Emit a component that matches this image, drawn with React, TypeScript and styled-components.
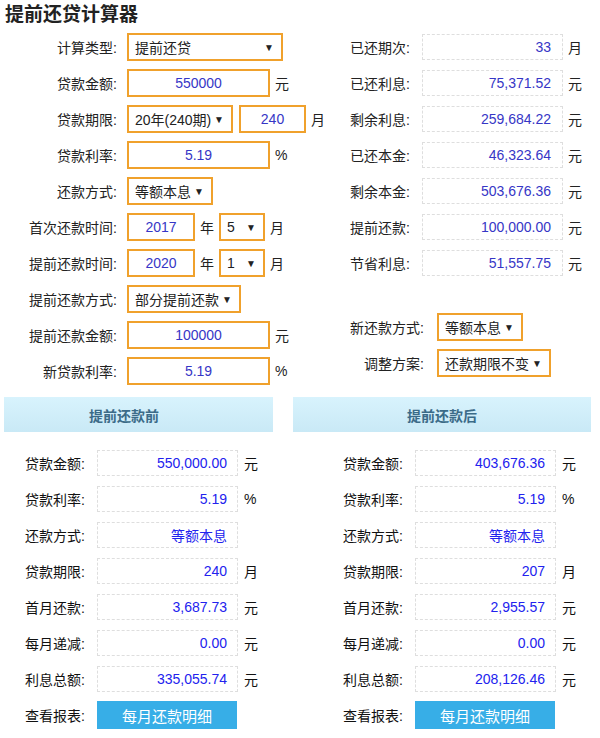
import styled, { createGlobalStyle } from "styled-components";

const Global = createGlobalStyle`
  body {
    margin: 0;
    background: #fff;
    color: #222;
    font-family: "Liberation Sans", "Noto Sans CJK SC", sans-serif;
    font-size: 14px;
  }
`;

const Page = styled.div`
  width: 600px;
  padding-bottom: 9px;
`;

const Title = styled.h1`
  margin: 0;
  padding-left: 5px;
  font-size: 19px;
  line-height: 29px;
  font-weight: bold;
  color: #222;
`;

const Top = styled.div`
  display: flex;
`;

const FormCol = styled.div`
  width: 330px;
  display: flex;
  flex-direction: column;
`;

const ResultCol = styled.div`
  display: flex;
  flex-direction: column;
`;

const Row = styled.div<{ $top?: number }>`
  display: flex;
  align-items: center;
  height: 36px;
  margin-top: ${(p) => p.$top ?? 0}px;
`;

const Label = styled.span<{ $w: number; $gap: number }>`
  width: ${(p) => p.$w}px;
  margin-right: ${(p) => p.$gap}px;
  text-align: right;
  white-space: nowrap;
  color: #222;
`;

const Unit = styled.span`
  margin: 0 5px;
  color: #222;
`;

const Field = styled.input<{ $w: number }>`
  box-sizing: border-box;
  width: ${(p) => p.$w}px;
  height: 28px;
  border: 2px solid #f0a12c;
  background: #fff;
  padding: 0;
  text-align: center;
  font: inherit;
  color: #3636c6;
  outline: none;
`;

const Select = styled.div<{ $w: number; $after?: number }>`
  box-sizing: border-box;
  width: ${(p) => p.$w}px;
  height: 28px;
  margin-right: ${(p) => p.$after ?? 0}px;
  border: 2px solid #f0a12c;
  background: #fff;
  display: flex;
  align-items: center;
  padding: 0 7px 0 6px;
  color: #222;
  white-space: nowrap;
  span {
    margin-left: auto;
    font-size: 10px;
  }
`;

const Result = styled.div`
  box-sizing: border-box;
  width: 141px;
  height: 26px;
  border: 1px dashed #dedede;
  padding-right: 11px;
  display: flex;
  align-items: center;
  justify-content: flex-end;
  color: #3636c6;
`;

const Bottom = styled.div`
  display: flex;
  margin-top: 8px;
`;

const Panel = styled.div<{ $left: number; $w: number; $indent: number }>`
  margin-left: ${(p) => p.$left}px;
  width: ${(p) => p.$w}px;
  display: flex;
  flex-direction: column;
  > div:not(:first-child) {
    padding-left: ${(p) => p.$indent}px;
  }
`;

const Bar = styled.div<{ $shift?: number }>`
  height: 35px;
  margin-bottom: 13px;
  background: linear-gradient(to bottom, #d8f3fd, #c9e9f6);
  display: flex;
  align-items: center;
  justify-content: center;
  padding-right: ${(p) => p.$shift ?? 0}px;
  font-weight: bold;
  color: #3b6b88;
`;

const OutLabel = styled.span`
  width: 63px;
  margin-right: 12px;
  text-align: right;
  white-space: nowrap;
  color: #111;
`;

const OutBox = styled.div`
  box-sizing: border-box;
  width: 141px;
  height: 26px;
  border: 1px dashed #dedede;
  padding-right: 10px;
  display: flex;
  align-items: center;
  justify-content: flex-end;
  color: #2222ee;
`;

const OutUnit = styled.span`
  margin-left: 6px;
  color: #111;
`;

const DetailButton = styled.button`
  width: 140px;
  height: 28px;
  border: none;
  background: #37aee7;
  color: #fff;
  font-family: "Liberation Sans", "Noto Sans CJK SC", sans-serif;
  font-size: 15px;
  padding: 0;
  cursor: pointer;
`;

const results = [
  { label: "已还期次:", value: "33", unit: "月" },
  { label: "已还利息:", value: "75,371.52", unit: "元" },
  { label: "剩余利息:", value: "259,684.22", unit: "元" },
  { label: "已还本金:", value: "46,323.64", unit: "元" },
  { label: "剩余本金:", value: "503,676.36", unit: "元" },
  { label: "提前还款:", value: "100,000.00", unit: "元" },
  { label: "节省利息:", value: "51,557.75", unit: "元" },
];

const before = [
  { label: "贷款金额:", value: "550,000.00", unit: "元" },
  { label: "贷款利率:", value: "5.19", unit: "%" },
  { label: "还款方式:", value: "等额本息", unit: "" },
  { label: "贷款期限:", value: "240", unit: "月" },
  { label: "首月还款:", value: "3,687.73", unit: "元" },
  { label: "每月递减:", value: "0.00", unit: "元" },
  { label: "利息总额:", value: "335,055.74", unit: "元" },
];

const after = [
  { label: "贷款金额:", value: "403,676.36", unit: "元" },
  { label: "贷款利率:", value: "5.19", unit: "%" },
  { label: "还款方式:", value: "等额本息", unit: "" },
  { label: "贷款期限:", value: "207", unit: "月" },
  { label: "首月还款:", value: "2,955.57", unit: "元" },
  { label: "每月递减:", value: "0.00", unit: "元" },
  { label: "利息总额:", value: "208,126.46", unit: "元" },
];

type Line = { label: string; value: string; unit: string };

function OutRows({ rows }: { rows: Line[] }) {
  return (
    <>
      {rows.map((r) => (
        <Row key={r.label}>
          <OutLabel>{r.label}</OutLabel>
          <OutBox>{r.value}</OutBox>
          {r.unit && <OutUnit>{r.unit}</OutUnit>}
        </Row>
      ))}
      <Row>
        <OutLabel>查看报表:</OutLabel>
        <DetailButton>每月还款明细</DetailButton>
      </Row>
    </>
  );
}

const Arrow = () => <span>▼</span>;

export default function App() {
  return (
    <Page>
      <Global />
      <Title>提前还贷计算器</Title>
      <Top>
        <FormCol>
          <Row>
            <Label $w={117} $gap={10}>计算类型:</Label>
            <Select $w={156}>
              提前还贷
              <Arrow />
            </Select>
          </Row>
          <Row>
            <Label $w={117} $gap={10}>贷款金额:</Label>
            <Field $w={143} value="550000" readOnly />
            <Unit>元</Unit>
          </Row>
          <Row>
            <Label $w={117} $gap={10}>贷款期限:</Label>
            <Select $w={106} $after={6}>
              20年(240期)
              <Arrow />
            </Select>
            <Field $w={67} value="240" readOnly />
            <Unit>月</Unit>
          </Row>
          <Row>
            <Label $w={117} $gap={10}>贷款利率:</Label>
            <Field $w={143} value="5.19" readOnly />
            <Unit>%</Unit>
          </Row>
          <Row>
            <Label $w={117} $gap={10}>还款方式:</Label>
            <Select $w={86}>
              等额本息
              <Arrow />
            </Select>
          </Row>
          <Row>
            <Label $w={117} $gap={10}>首次还款时间:</Label>
            <Field $w={68} value="2017" readOnly />
            <Unit>年</Unit>
            <Select $w={46}>
              5
              <Arrow />
            </Select>
            <Unit>月</Unit>
          </Row>
          <Row>
            <Label $w={117} $gap={10}>提前还款时间:</Label>
            <Field $w={68} value="2020" readOnly />
            <Unit>年</Unit>
            <Select $w={46}>
              1
              <Arrow />
            </Select>
            <Unit>月</Unit>
          </Row>
          <Row>
            <Label $w={117} $gap={10}>提前还款方式:</Label>
            <Select $w={114}>
              部分提前还款
              <Arrow />
            </Select>
          </Row>
          <Row>
            <Label $w={117} $gap={10}>提前还款金额:</Label>
            <Field $w={143} value="100000" readOnly />
            <Unit>元</Unit>
          </Row>
          <Row>
            <Label $w={117} $gap={10}>新贷款利率:</Label>
            <Field $w={143} value="5.19" readOnly />
            <Unit>%</Unit>
          </Row>
        </FormCol>
        <ResultCol>
          {results.map((r) => (
            <Row key={r.label}>
              <Label $w={80} $gap={12}>{r.label}</Label>
              <Result>{r.value}</Result>
              <Unit>{r.unit}</Unit>
            </Row>
          ))}
          <Row $top={28}>
            <Label $w={94} $gap={13}>新还款方式:</Label>
            <Select $w={86}>
              等额本息
              <Arrow />
            </Select>
          </Row>
          <Row>
            <Label $w={94} $gap={13}>调整方案:</Label>
            <Select $w={114}>
              还款期限不变
              <Arrow />
            </Select>
          </Row>
        </ResultCol>
      </Top>
      <Bottom>
        <Panel $left={4} $w={269} $indent={18}>
          <Bar $shift={29}>提前还款前</Bar>
          <OutRows rows={before} />
        </Panel>
        <Panel $left={20} $w={298} $indent={47}>
          <Bar>提前还款后</Bar>
          <OutRows rows={after} />
        </Panel>
      </Bottom>
    </Page>
  );
}
